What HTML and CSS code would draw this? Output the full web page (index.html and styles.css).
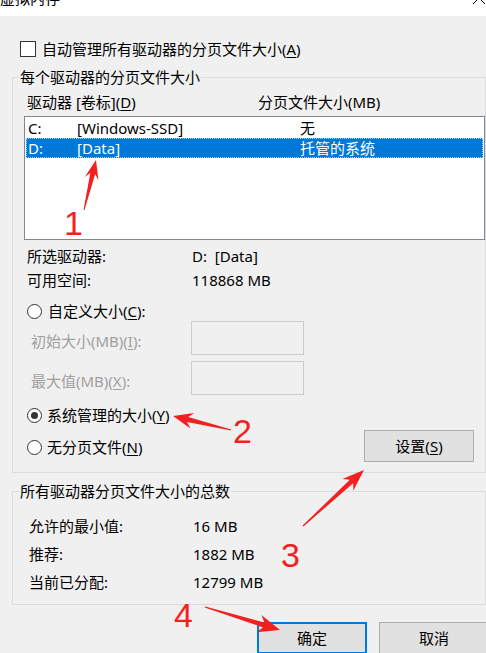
FILE: index.html
```html
<!DOCTYPE html>
<html lang="zh-CN">
<head>
<meta charset="utf-8">
<title>虚拟内存</title>
<link rel="stylesheet" href="styles.css">
</head>
<body>
<div class="titlebar">
  <span class="title">虚拟内存</span>
  <svg class="close" width="14" height="14" viewBox="0 0 14 14"><path d="M1 1 L13 13 M13 1 L1 13" stroke="#000" stroke-width="1" fill="none"/></svg>
</div>
<main class="dialog">
  <label class="check-row"><span class="checkbox"></span><span>自动管理所有驱动器的分页文件大小(<u>A</u>)</span></label>

  <fieldset class="group drives">
    <legend>每个驱动器的分页文件大小</legend>
    <div class="list-head"><span class="head-drive">驱动器 [卷标](<u>D</u>)</span><span>分页文件大小(MB)</span></div>
    <div class="listbox">
      <div class="row"><span class="c1">C:</span><span class="c2">[Windows-SSD]</span><span>无</span></div>
      <div class="row selected"><span class="c1">D:</span><span class="c2">[Data]</span><span>托管的系统</span></div>
    </div>
    <div class="info">
      <div class="info-row"><span class="info-label">所选驱动器:</span><span>D:&nbsp; [Data]</span></div>
      <div class="info-row"><span class="info-label">可用空间:</span><span>118868 MB</span></div>
    </div>
    <div class="radio-row custom"><span class="radio"></span><span>自定义大小(<u>C</u>):</span></div>
    <div class="field-row"><span class="field-label">初始大小(MB)(<u>I</u>):</span><span class="textbox"></span></div>
    <div class="field-row"><span class="field-label">最大值(MB)(<u>X</u>):</span><span class="textbox"></span></div>
    <div class="bottom-area">
      <div class="radios">
        <div class="radio-row"><span class="radio checked"></span><span>系统管理的大小(<u>Y</u>)</span></div>
        <div class="radio-row"><span class="radio"></span><span>无分页文件(<u>N</u>)</span></div>
      </div>
      <button class="btn set-btn" type="button">设置(<u>S</u>)</button>
    </div>
  </fieldset>

  <fieldset class="group totals">
    <legend>所有驱动器分页文件大小的总数</legend>
    <div class="total-row"><span class="total-label">允许的最小值:</span><span>16 MB</span></div>
    <div class="total-row"><span class="total-label">推荐:</span><span>1882 MB</span></div>
    <div class="total-row"><span class="total-label">当前已分配:</span><span>12799 MB</span></div>
  </fieldset>

  <div class="actions">
    <button class="btn default" type="button">确定</button>
    <button class="btn" type="button">取消</button>
  </div>
</main>

<svg class="annotations" width="486" height="653" viewBox="0 0 486 653">
  <g fill="#f41f1f">
    <polygon points="83.5,209.9 90.3,173.0 84.8,176.9 96,160 98.4,180.1 95.1,174.2 84.5,210.1"/>
    <polygon points="231.1,429.4 188.2,417.1 194.3,412.9 173,416 190.5,428.5 187.0,421.9 230.9,430.6"/>
    <polygon points="302.6,525.6 349.8,479.7 342.4,479.0 364,470 353.2,490.8 353.2,483.3 303.4,526.4"/>
    <polygon points="205.2,606.4 264.4,622.6 261.5,615.0 280,630 256.3,632.2 263.0,627.4 204.8,607.6"/>
  </g>
  <g class="num" fill="#f41f1f">
    <text x="64" y="235">1</text>
    <text x="233" y="443">2</text>
    <text x="281" y="567">3</text>
    <text x="174" y="627">4</text>
  </g>
</svg>
</body>
</html>
```

FILE: styles.css
```css
html, body {
  margin: 0;
  padding: 0;
  overflow: hidden;
}
body {
  width: 486px;
  height: 653px;
  background: #f0f0f0;
  font-family: "Noto Sans", "Noto Sans CJK SC", sans-serif;
  font-size: 15px;
  color: #000;
  position: relative;
}
u { text-decoration: underline; text-underline-offset: 2px; }

.titlebar {
  height: 16px;
  background: #fff;
  overflow: hidden;
  display: flex;
  justify-content: space-between;
  align-items: flex-start;
}
.title {
  line-height: 16px;
  margin-top: -10px;
  margin-left: 0;
}
.close {
  margin-top: -9px;
  margin-right: 0;
}

.dialog {
  padding-left: 12px;
}

.check-row {
  display: flex;
  align-items: center;
  gap: 6px;
  margin-top: 22px;
  margin-left: 8px;
  height: 22px;
  line-height: 22px;
}
.checkbox {
  width: 14px;
  height: 14px;
  border: 1px solid #333;
  background: #fff;
  flex: none;
}

.group {
  margin: 0;
  border: 1px solid #dcdcdc;
  min-width: 0;
}
.group legend {
  line-height: 18px;
  padding: 0 1px;
}

.drives {
  margin-top: 8px;
  padding: 7px 0 10px 11px;
}
.drives legend {
  margin-left: -5px;
}

.list-head {
  display: flex;
  line-height: 18px;
  padding-left: 3px;
}
.head-drive { width: 231px; }

.listbox {
  margin-top: 5px;
  height: 120px;
  border: 1px solid #828790;
  background: #fff;
  padding: 1px;
}
.row {
  display: flex;
  height: 20px;
  line-height: 20px;
  padding-left: 2px;
}
.c1 { width: 49px; }
.c2 { width: 223px; }
.row.selected {
  background: #0078d7;
  color: #fff;
  outline: 1px dotted #9fd0f5;
  outline-offset: -1px;
}

.info {
  margin-top: 4px;
  padding-left: 3px;
}
.info-row {
  display: flex;
  height: 24px;
  line-height: 24px;
}
.info-label { width: 165px; }

.radio-row {
  display: flex;
  align-items: center;
  gap: 6px;
  height: 20px;
  line-height: 20px;
  padding-left: 3px;
}
.radio {
  width: 13px;
  height: 13px;
  border: 1px solid #333;
  border-radius: 50%;
  background: #fff;
  flex: none;
  position: relative;
}
.radio.checked::after {
  content: "";
  position: absolute;
  left: 3px;
  top: 3px;
  width: 7px;
  height: 7px;
  border-radius: 50%;
  background: #333;
}
.custom { margin-top: 9px; }

.field-row {
  display: flex;
  align-items: center;
  height: 34px;
  padding-left: 7px;
  color: #a0a0a0;
}
.field-row + .field-row { margin-top: 6px; }
.field-label {
  width: 160px;
  padding-top: 4px;
}
.textbox {
  width: 111px;
  height: 32px;
  border: 1px solid #cccccc;
  background: #f0f0f0;
}

.bottom-area {
  display: flex;
  justify-content: space-between;
  align-items: flex-end;
  margin-top: 10px;
}
.radios {
  display: flex;
  flex-direction: column;
  gap: 12px;
  padding-bottom: 5px;
}
.radios .radio-row { gap: 5px; }

.btn {
  font: inherit;
  color: #000;
  width: 110px;
  height: 32px;
  background: #e1e1e1;
  border: 1px solid #adadad;
  padding: 0;
  line-height: 30px;
}
.set-btn { margin-right: 11px; }

.totals {
  margin-top: 9px;
  padding: 12px 0 8px 16px;
}
.totals legend { margin-left: -10px; }
.total-row {
  display: flex;
  height: 28px;
  line-height: 28px;
}
.total-label { width: 164px; }

.actions {
  display: flex;
  gap: 12px;
  margin-top: 17px;
  padding-left: 245px;
}
.btn.default {
  border: 2px solid #0078d7;
  line-height: 28px;
}
.actions .btn { flex: none; }

.annotations {
  position: absolute;
  left: 0;
  top: 0;
  pointer-events: none;
}
.num text {
  font-family: "Liberation Sans", sans-serif;
  font-size: 34px;
}
```
